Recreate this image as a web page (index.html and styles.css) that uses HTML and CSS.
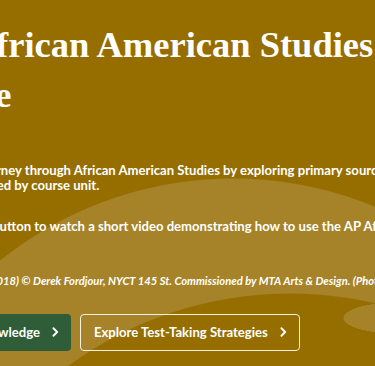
FILE: index.html
```html
<!DOCTYPE html>
<html lang="en">

<head>
    <meta charset="UTF-8">
    <meta name="viewport" content="width=device-width, initial-scale=1.0">
    <title>AP African American Studies</title>
    <link rel="stylesheet" href="styles.css">
</head>

<body>
    <section class="hero">
        <section class="hero-inner">
            <h1 class="hero-title">AP African American Studies<br>Guide</h1>
            <p class="hero-text">Take a journey through African American Studies by exploring primary sources that<br>are arranged by course unit.</p>
            <p class="hero-text hero-text-video">Click the button to watch a short video demonstrating how to use the AP African American Studies guide.</p>
            <p class="hero-credit">Artwork: Half Full (2018) © Derek Fordjour, NYCT 145 St. Commissioned by MTA Arts &amp; Design. (Photo: Trent Reeves)</p>
            <section class="hero-buttons">
                <section class="btn-slot">
                    <a class="btn btn-green" href="#">Test Your Knowledge
                        <svg class="chev" viewBox="0 0 8 12" width="7" height="10"><polyline points="1.5,1.5 6,6 1.5,10.5" /></svg>
                    </a>
                </section>
                <a class="btn btn-outline" href="#">Explore Test-Taking Strategies
                    <svg class="chev" viewBox="0 0 8 12" width="7" height="10"><polyline points="1.5,1.5 6,6 1.5,10.5" /></svg>
                </a>
            </section>
        </section>
    </section>
</body>

</html>
```

FILE: styles.css
```css
body {
    margin: 0;
    padding: 0;
    overflow: hidden;
    height: 100vh;
    width: 100vw;
    background-color: rgb(150, 110, 0);
}

* {
    box-sizing: border-box;
    font-family: Lato, 'Open Sans', sans-serif;
}

.hero {
    height: 366px;
    width: 100%;
    overflow: hidden;
    color: white;
    background-color: rgb(150, 110, 0);
    background-image:
        radial-gradient(ellipse 57px 16px at 400px 318px, rgb(166, 131, 40) 98%, transparent 100%),
        radial-gradient(circle 377px at 290px 670px, rgb(150, 110, 0) 99.7%, transparent 100%),
        radial-gradient(circle 372px at 233px 550px, rgb(166, 131, 40) 99.7%, transparent 100%);
}

.hero-inner {
    padding-top: 20px;
    white-space: nowrap;
}

.hero-title {
    margin: 0 0 0 -84px;
    font-family: 'Liberation Serif', serif;
    font-size: 36.5px;
    line-height: 50px;
    font-weight: 700;
}

.hero-text {
    margin: 43px 0 0 -62px;
    font-size: 13.1px;
    line-height: 14.5px;
    font-weight: 700;
}

.hero-text-video {
    margin-top: 27px;
}

.hero-credit {
    margin: 40px 0 0 -99px;
    font-size: 11.2px;
    line-height: 14.4px;
    font-style: italic;
    font-weight: 700;
}

.hero-buttons {
    display: flex;
    gap: 9px;
    margin-top: 26px;
}

.btn-slot {
    width: 71px;
    display: flex;
    justify-content: flex-end;
}

.btn {
    display: flex;
    align-items: center;
    gap: 12px;
    height: 37px;
    padding: 0 12px 0 13px;
    border-radius: 4px;
    color: white;
    text-decoration: none;
    font-size: 13.1px;
    font-weight: 700;
    flex-shrink: 0;
}

.btn-green {
    background-color: rgb(47, 93, 56);
}

.btn-outline {
    border: 1.5px solid rgb(245, 240, 225);
}

.chev {
    fill: none;
    stroke: white;
    stroke-width: 2.2;
    stroke-linecap: round;
    stroke-linejoin: round;
}
```
